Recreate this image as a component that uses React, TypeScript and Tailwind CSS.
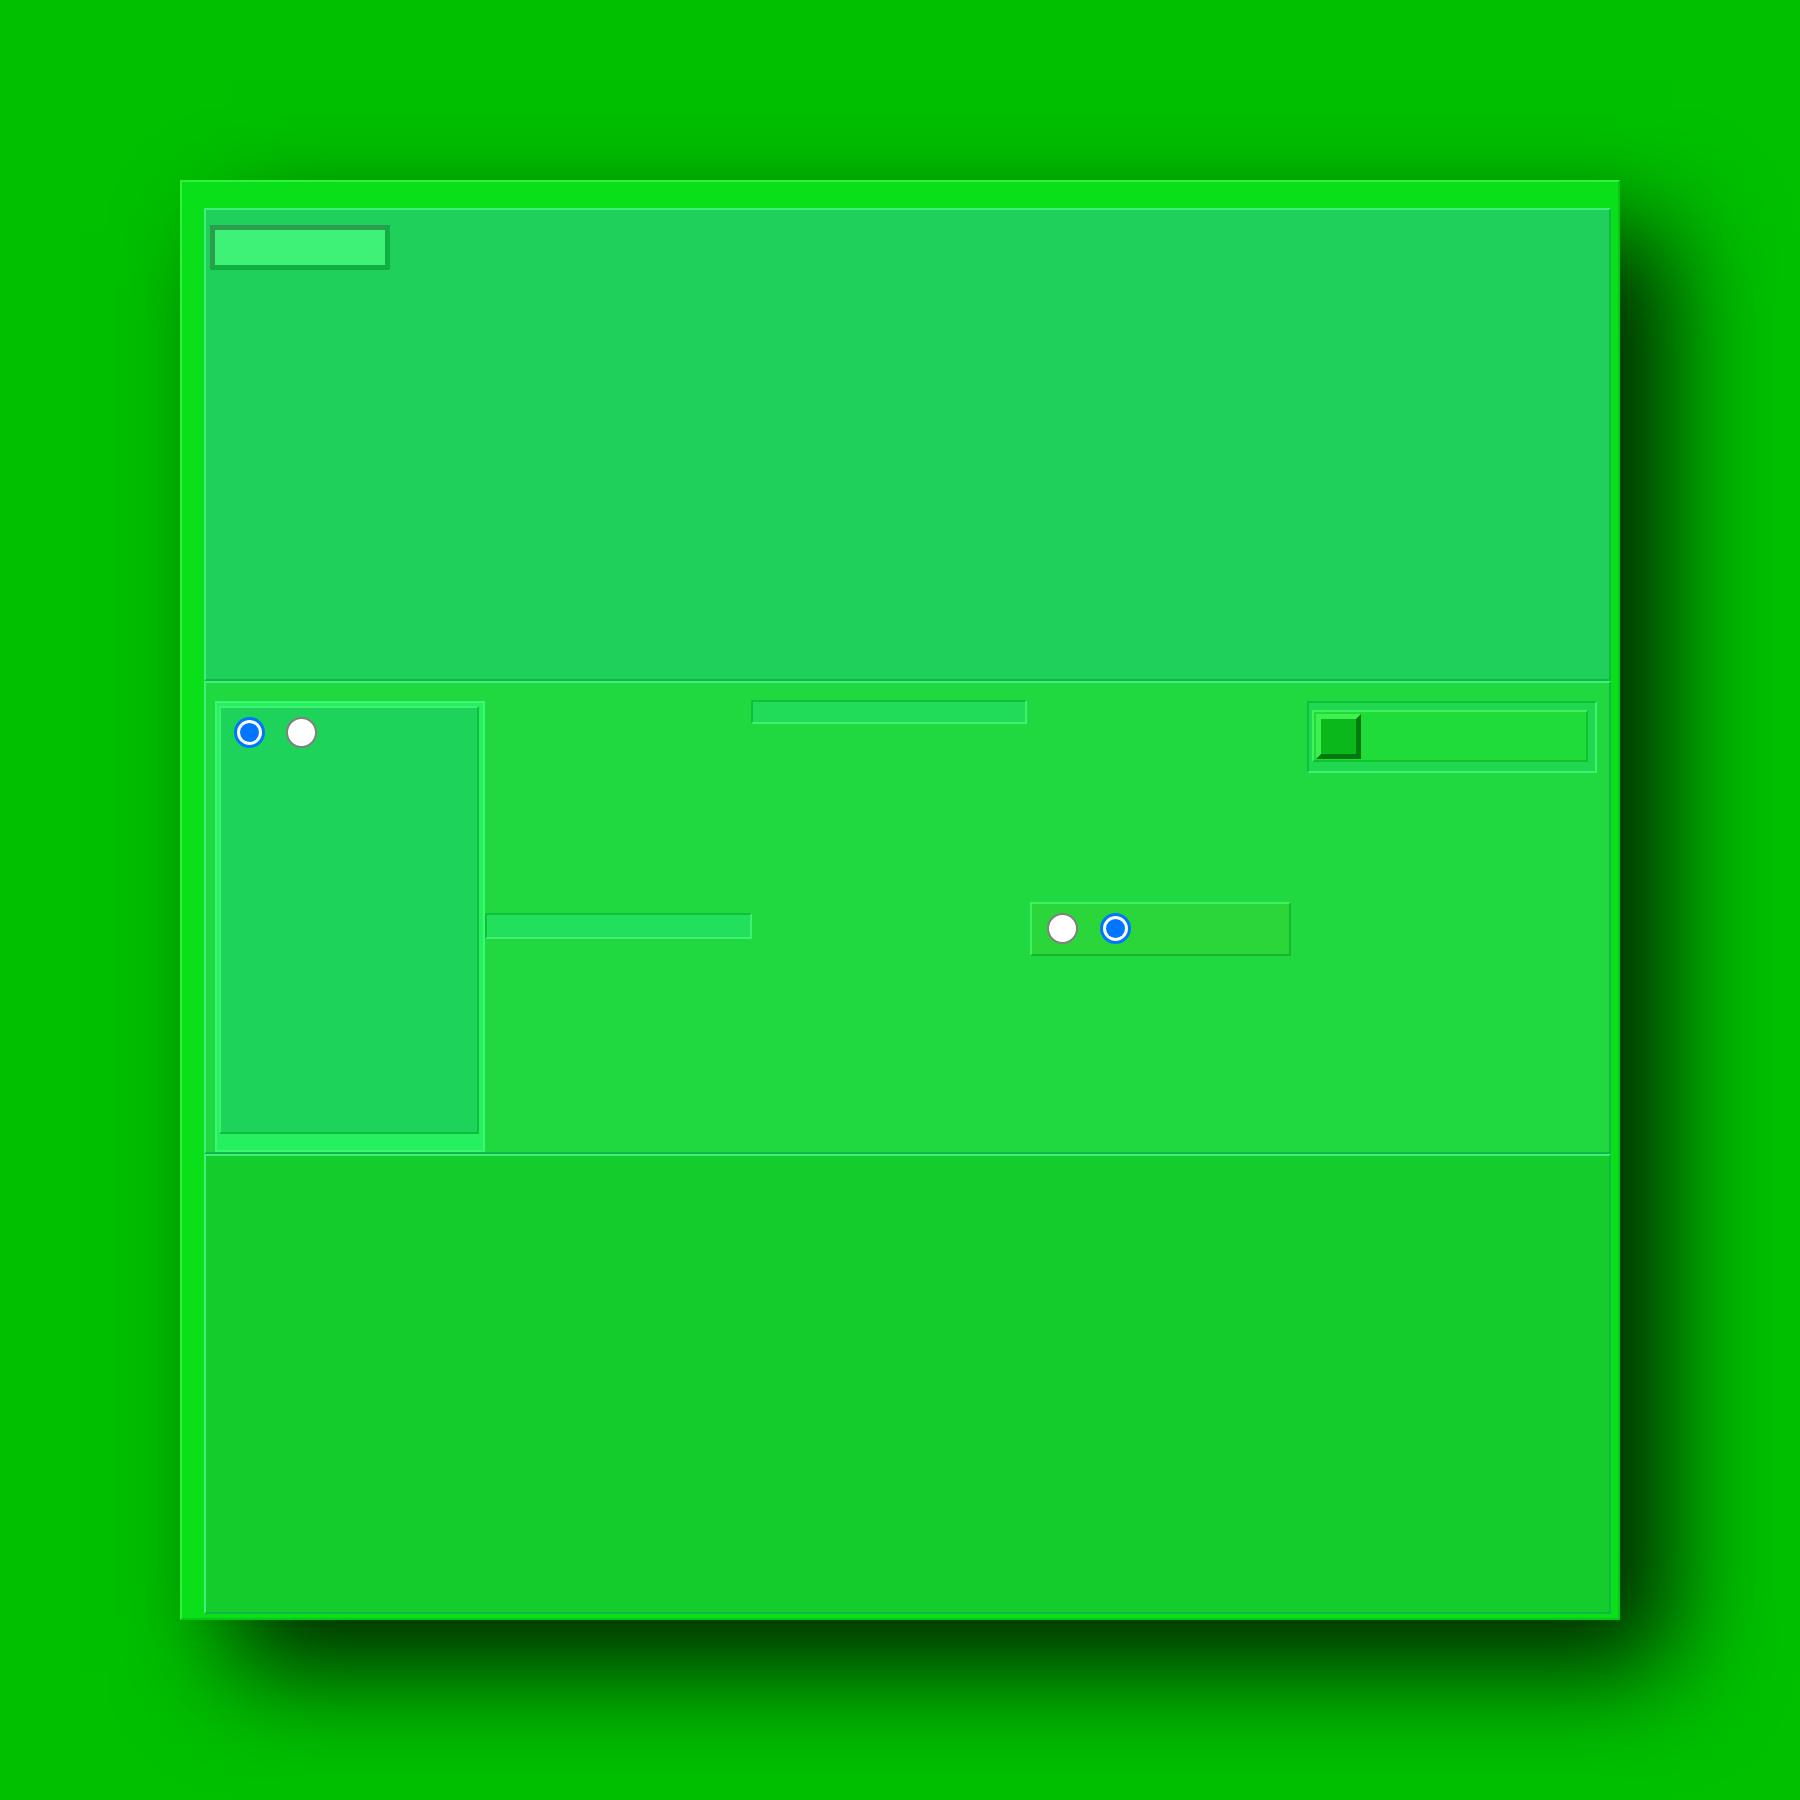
import React from "react";

// bevel helpers, written out so tailwind picks them up
const raised = "border-2 border-t-[#3ef07a] border-l-[#3ef07a] border-r-[#12b845] border-b-[#12b845]";
const sunken = "border-2 border-t-[#10c038] border-l-[#10c038] border-r-[#40f070] border-b-[#40f070]";

function Radio({ checked }: { checked?: boolean }) {
  if (checked) {
    return (
      <span className="flex h-[31px] w-[31px] shrink-0 items-center justify-center rounded-full border-[3px] border-[#0075ff] bg-white">
        <span className="h-[19px] w-[19px] rounded-full bg-[#0075ff]" />
      </span>
    );
  }
  return <span className="block h-[31px] w-[31px] shrink-0 rounded-full border-[2.5px] border-[#808080] bg-white" />;
}

export default function App() {
  return (
    <div className="h-[1800px] w-[1800px] overflow-hidden bg-[#00c000] pl-[180px] pt-[180px]">
      <div className="h-[1440px] w-[1440px] border-2 border-t-[#30f040] border-l-[#30f040] border-r-[#08c816] border-b-[#08c816] bg-[#0ae01a] pl-[22px] pt-[26px] shadow-[50px_50px_100px_rgba(0,0,0,0.8)]">
        <div className="flex h-[1406px] w-[1407px] flex-col">
          {/* top panel */}
          <div className={`h-[473px] shrink-0 bg-[#1fd15a] ${raised} pl-[4px] pt-[15px]`}>
            <div className="h-[45px] w-[180px] border-[5px] border-t-[#2a9d4f] border-l-[#2a9d4f] border-r-[#10b040] border-b-[#10b040] bg-[#3ef278]" />
          </div>

          {/* middle panel */}
          <div className={`flex h-[473px] shrink-0 items-start bg-[#20d840] ${raised}`}>
            <div className="ml-[9px] mt-[18px] h-[451px] w-[270px] shrink-0 border-2 border-[#3cf870] bg-[#25f060] pl-[2px] pt-[3px]">
              <div className="flex h-[428px] w-[260px] gap-[21px] border-2 border-t-[#40f070] border-l-[#40f070] border-r-[#0cc03c] border-b-[#0cc03c] bg-[#1ed35a] pl-[13px] pt-[9px]">
                <Radio checked />
                <Radio />
              </div>
            </div>
            <div className={`mt-[230px] h-[26px] w-[267px] shrink-0 bg-[#22e05c] ${sunken}`} />
            <div className={`-ml-[1px] mt-[17px] h-[24px] w-[276px] shrink-0 bg-[#20dc58] ${sunken}`} />
            <div className="ml-[3px] mt-[219px] flex h-[54px] w-[261px] shrink-0 gap-[22px] border-2 border-t-[#40f060] border-l-[#40f060] border-r-[#18b82a] border-b-[#18b82a] bg-[#2ad63a] pl-[15px] pt-[9px]">
              <Radio />
              <Radio checked />
            </div>
            <div className={`ml-[16px] mt-[18px] h-[72px] w-[290px] shrink-0 bg-[#1fd850] pl-[3px] pt-[7px] ${sunken}`}>
              <div className="h-[52px] w-[276px] border-2 border-t-[#40f060] border-l-[#40f060] border-r-[#10c030] border-b-[#10c030] bg-[#20dc38] pl-[2px] pt-[2px]">
                <div className="h-[45px] w-[45px] border-[5px] border-t-[#40f050] border-l-[#40f050] border-r-[#007a10] border-b-[#007a10] bg-[#0ab81a]" />
              </div>
            </div>
          </div>

          {/* bottom panel */}
          <div className={`flex-1 bg-[#14cc2c] ${raised}`} />
        </div>
      </div>
    </div>
  );
}
